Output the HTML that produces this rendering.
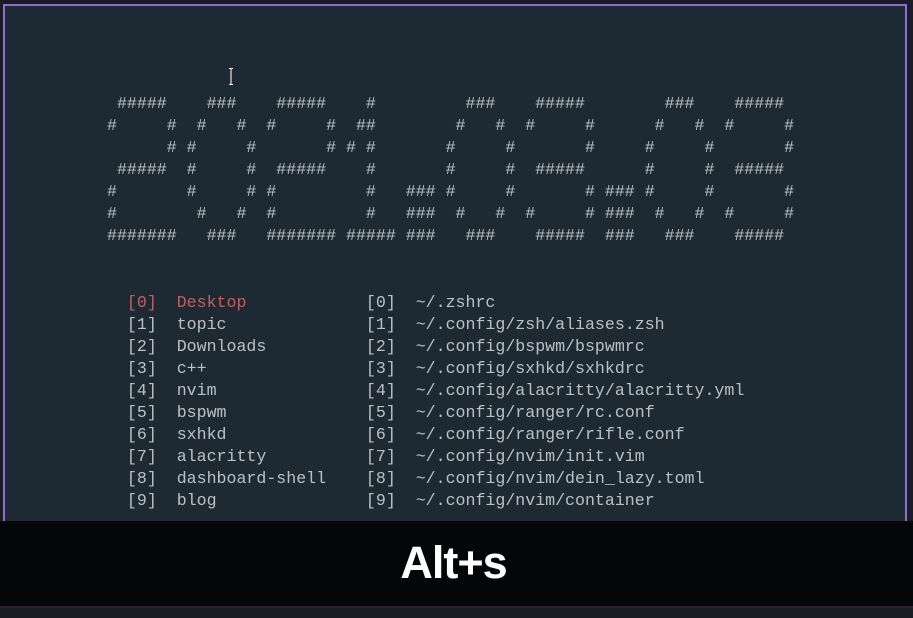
<!DOCTYPE html>
<html><head><meta charset="utf-8"><style>
html,body{margin:0;padding:0;width:913px;height:618px;overflow:hidden;background:#1c1d24;}
#term{position:absolute;left:3px;top:4px;width:904px;height:604px;box-sizing:border-box;border:2px solid #8a6fd6;background:#1d2a33;}
pre{margin:0;position:absolute;font-family:"Liberation Mono",monospace;font-size:16.6px;line-height:22px;color:#b9c1c6;}
.r{color:#c0605f}
#bar{position:absolute;left:0;top:521px;width:913px;height:85px;background:#040607;}
#bar div{position:absolute;left:0;right:0;top:16px;text-align:center;font-family:"Liberation Sans",sans-serif;font-weight:bold;font-size:45px;color:#fff;letter-spacing:-1px;padding-right:6px}
#line{position:absolute;left:0;top:606px;width:913px;height:2px;background:#2a2034}
#cur{position:absolute;left:229px;top:68px;width:4px;height:15px;border:1px solid #fff;border-left:none;border-right:none;}
#cur:after{content:"";position:absolute;left:1px;top:0;width:2px;height:15px;background:#999}
</style></head><body>
<div id="term"></div>
<div id="cur"></div>
<pre style="left:107px;top:93px"> #####    ###    #####    #         ###    #####        ###    #####
#     #  #   #  #     #  ##        #   #  #     #      #   #  #     #
      # #     #       # # #       #     #       #     #     #       #
 #####  #     #  #####    #       #     #  #####      #     #  #####
#       #     # #         #   ### #     #       # ### #     #       #
#        #   #  #         #   ###  #   #  #     # ###  #   #  #     #
#######   ###   ####### ##### ###   ###    #####  ###   ###    #####</pre>
<pre style="left:107px;top:292px">  <span class="r">[0]  Desktop</span>            [0]  ~/.zshrc
  [1]  topic              [1]  ~/.config/zsh/aliases.zsh
  [2]  Downloads          [2]  ~/.config/bspwm/bspwmrc
  [3]  c++                [3]  ~/.config/sxhkd/sxhkdrc
  [4]  nvim               [4]  ~/.config/alacritty/alacritty.yml
  [5]  bspwm              [5]  ~/.config/ranger/rc.conf
  [6]  sxhkd              [6]  ~/.config/ranger/rifle.conf
  [7]  alacritty          [7]  ~/.config/nvim/init.vim
  [8]  dashboard-shell    [8]  ~/.config/nvim/dein_lazy.toml
  [9]  blog               [9]  ~/.config/nvim/container</pre>
<div id="bar"><div>Alt+s</div></div>
<div id="line"></div>
</body></html>
